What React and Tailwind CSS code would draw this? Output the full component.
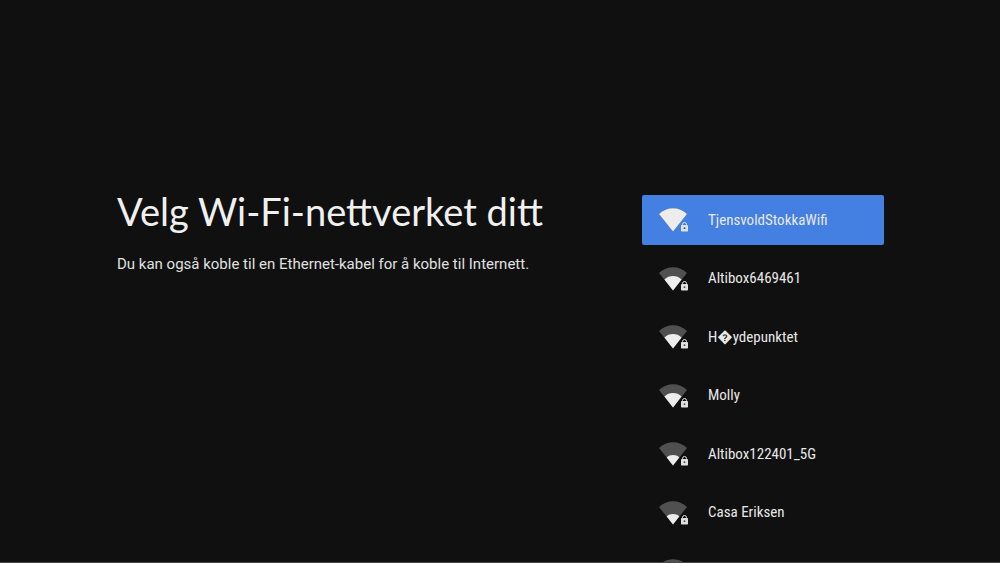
import React from 'react';

const networks = [
  { id: 1, name: 'TjensvoldStokkaWifi', level: 'full' },
  { id: 2, name: 'Altibox6469461', level: 'medium' },
  { id: 3, name: 'H\uFFFDydepunktet', level: 'medium' },
  { id: 4, name: 'Molly', level: 'medium' },
  { id: 5, name: 'Altibox122401_5G', level: 'low' },
  { id: 6, name: 'Casa Eriksen', level: 'low' },
  { id: 7, name: '', level: 'low' }
];

const signalPaths = {
  full: 'M15 24.5 L1 7 C5 3.3 9.8 1.3 15 1.3 S25 3.3 29 7 Z',
  medium: 'M15 24.5 L6.4 13.6 C8.8 11.1 11.8 10 15 10 S21.2 11.1 23.6 13.6 Z',
  low: 'M15 24.5 L8.7 16.4 C10.4 14.7 12.6 14 15 14 S19.6 14.7 21.3 16.4 Z'
};

const WifiLockIcon = ({ level }) => (
  <svg className="w-8 h-[26px] shrink-0" viewBox="0 0 32 26" aria-hidden="true">
    <path d={signalPaths.full} fill="#505050" />
    <path d={signalPaths[level]} fill="#ededed" />
    <path d="M24.5 18.5 v-1 a2 2 0 0 1 4 0 v1" fill="none" stroke="#e0e0e0" strokeWidth="1" />
    <rect x="23" y="18" width="7" height="6.5" rx="0.8" fill="#e0e0e0" />
    <circle cx="26.5" cy="21.2" r="0.9" fill="#444444" />
  </svg>
);

const App = () => {
  return (
    <main className="h-screen overflow-hidden flex justify-between items-start bg-[#101010] border-b border-[#484848] pt-[195px] pl-[117px] pr-[116px] text-[#e8e8e8] font-['Roboto',sans-serif]">
      <div>
        <h1 className="text-[38px] leading-[32px] font-normal text-[#f0f0f0] font-['Google_Sans','Product_Sans','Lato',sans-serif]">
          Velg Wi-Fi-nettverket ditt
        </h1>
        <p className="mt-[26px] text-[15px] leading-[22px] text-[#e0e0e0]">
          Du kan også koble til en Ethernet-kabel for å koble til Internett.
        </p>
      </div>

      <ul className="w-[242px] h-[401px] shrink-0 flex flex-col justify-between">
        {networks.map((network) => (
          <li key={network.id}>
            <button
              type="button"
              aria-label={network.name || 'Wi-Fi'}
              className={`w-full h-[50px] px-4 flex items-center gap-[18px] rounded-xs text-left text-[15px] font-['Roboto_Condensed','Liberation_Sans_Narrow','Roboto',sans-serif] ${
                network.id === 1 ? 'bg-[#4480e2]' : ''
              }`}
            >
              <WifiLockIcon level={network.level} />
              <span className="whitespace-nowrap">{network.name}</span>
            </button>
          </li>
        ))}
      </ul>
    </main>
  );
};

export default App;
